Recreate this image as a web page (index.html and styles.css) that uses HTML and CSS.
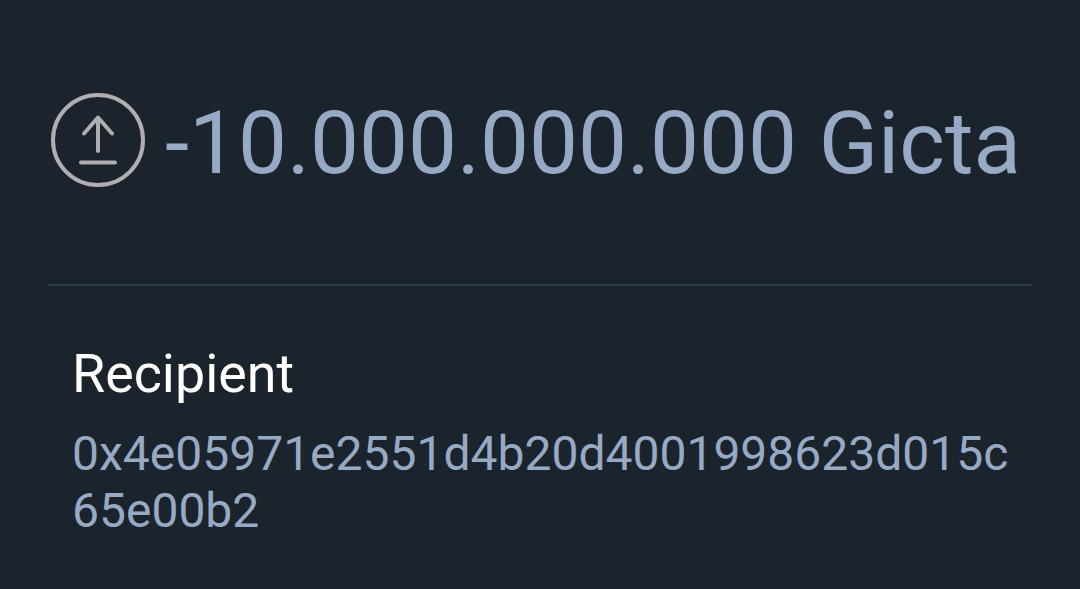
FILE: index.html
```html
<!DOCTYPE html>
<html lang="en">
<head>
    <meta charset="UTF-8">
    <meta name="viewport" content="width=device-width, initial-scale=1.0">
    <title>Transaction</title>
    <link rel="stylesheet" href="styles.css">
</head>
<body>
    <div class="container">
        <div class="amount-row">
            <svg class="send-icon" viewBox="0 0 96 96">
                <circle cx="48" cy="48" r="45"/>
                <path d="M48 59V25.5M34 41.5l14-16 14 16M31 70.5h34"/>
            </svg>
            <h1>-10.000.000.000 Gicta</h1>
        </div>
        <div class="recipient">
            <h2>Recipient</h2>
            <p class="address">0x4e05971e2551d4b20d4001998623d015c65e00b2</p>
        </div>
    </div>
</body>
</html>
```
FILE: styles.css
```css
body {
    font-family: Roboto, sans-serif;
    background-color: #1b232d;
    margin: 0;
}

.container {
    box-sizing: border-box;
    height: 589px;
    padding: 0 48px;
}

.amount-row {
    box-sizing: border-box;
    display: flex;
    align-items: center;
    height: 286px;
    padding: 0 0 4px 2px;
    border-bottom: 2px solid #2e3a47; /* Divider */
}

.send-icon {
    flex: none;
    width: 96px;
    height: 96px;
    margin-right: 19px;
    fill: none;
    stroke: #afafb1;
    stroke-width: 4;
    stroke-linecap: round;
    stroke-linejoin: round;
}

h1 {
    margin: 0;
    padding-top: 6px;
    color: #97aac5;
    font-size: 87.2px;
    font-weight: 400;
    white-space: nowrap;
}

.recipient {
    padding: 56px 0 0 24px;
}

h2 {
    margin: 0;
    color: #fff;
    font-size: 53.8px;
    font-weight: 400;
    line-height: 64px;
}

.address {
    margin: 19px 0 0;
    color: #97aac5;
    font-size: 48px;
    line-height: 57px;
    word-break: break-all;
}
```
